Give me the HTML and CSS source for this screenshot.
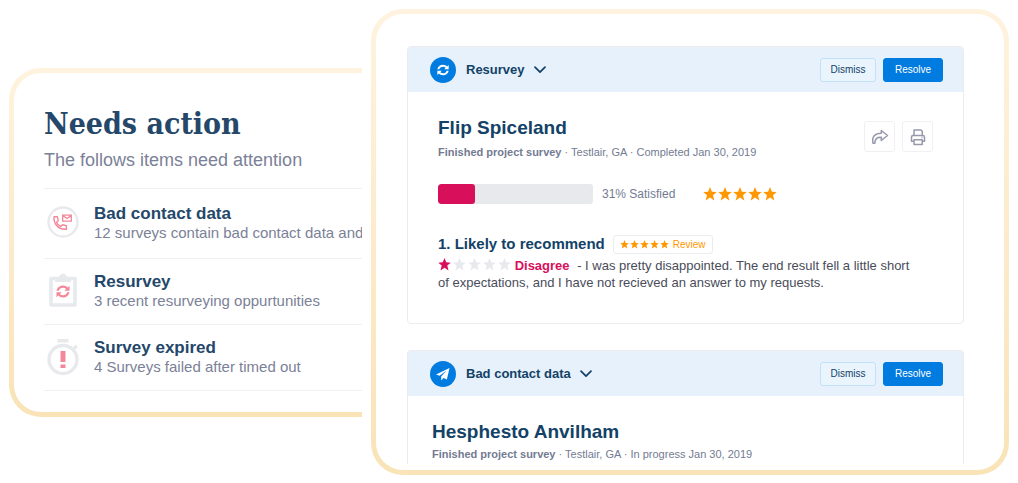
FILE: index.html
```html
<!DOCTYPE html>
<html lang="en">
<head>
    <meta charset="UTF-8">
    <meta name="viewport" content="width=device-width, initial-scale=1.0">
    <title>Needs action</title>
    <link rel="stylesheet" href="styles.css">
</head>
<body>
    <svg class="sprite" aria-hidden="true">
        <symbol id="star" viewBox="0 0 14 14">
            <path d="M7 0l1.900 4.700 4.800.3-3.700 3.200 1.300 5.200L7 10.600l-4.300 2.800L4 8.200.3 5l4.800-.3z"/>
        </symbol>
        <symbol id="sync" viewBox="0 0 16 16">
            <path d="M1.500 7.200C2 4.200 4.700 1.900 8 1.900c1.900 0 3.600.8 4.700 2l1.800-1.700v5H9.400l1.700-1.700A4.300 4.300 0 0 0 8 4.200c-2 0-3.700 1.200-4.200 3z"/>
            <path d="M14.500 8.800c-.5 3-3.200 5.300-6.500 5.300-1.900 0-3.600-.8-4.700-2l-1.800 1.700v-5h5.100l-1.700 1.700A4.300 4.300 0 0 0 8 11.800c2 0 3.700-1.200 4.200-3z"/>
        </symbol>
        <symbol id="chevron" viewBox="0 0 12 8">
            <path d="M1 1.200l5 5 5-5" fill="none" stroke="currentColor" stroke-width="1.700" stroke-linecap="round" stroke-linejoin="round"/>
        </symbol>
    </svg>

    <main class="page">
        <section class="panel summary">
            <h1>Needs action</h1>
            <p class="intro">The follows items need attention</p>
            <ul class="items">
                <li>
                    <svg class="item-icon" viewBox="0 0 32 38" aria-hidden="true">
                        <circle cx="16" cy="18" r="14.500" fill="none" stroke="#e8e9ed" stroke-width="2.400"/>
                        <path d="M7 12.800h3.400l.9 4-1.800 1.400c.8 2.200 2.200 3.600 4.400 4.400l1.500-1.800 4 .9v3.500C12 26 6.500 20.500 7 12.800z" fill="none" stroke="#f4889a" stroke-width="1.400" stroke-linejoin="round"/>
                        <path d="M15.700 11.200h8.600v6h-8.600zM15.900 11.600l4.100 2.900 4.100-2.900" fill="none" stroke="#f4889a" stroke-width="1.300"/>
                    </svg>
                    <div>
                        <h2>Bad contact data</h2>
                        <p>12 surveys contain bad contact data and</p>
                    </div>
                </li>
                <li>
                    <svg class="item-icon" viewBox="0 0 32 38" aria-hidden="true">
                        <path d="M4 6.500h24v26.500H4z" fill="none" stroke="#e8e9ed" stroke-width="3.600" stroke-linejoin="round"/>
                        <path d="M8 10V5h4c.7-2 2-3.200 4-3.200S19.300 3 20 5h4v5z" fill="#e8e9ed"/>
                        <svg x="8" y="11" width="16" height="17" fill="#f4889a"><use href="#sync"/></svg>
                    </svg>
                    <div>
                        <h2>Resurvey</h2>
                        <p>3 recent resurveying oppurtunities</p>
                    </div>
                </li>
                <li>
                    <svg class="item-icon" viewBox="0 0 32 38" aria-hidden="true">
                        <path d="M10.500 1h11v3.600h-11zM25.500 9.500l3-3 2.500 2.500-3 3z" fill="#e8e9ed"/>
                        <circle cx="16" cy="21.500" r="14" fill="none" stroke="#e8e9ed" stroke-width="3.400"/>
                        <path d="M13.500 13h5v11h-5zM13.500 26.500h5V30h-5z" fill="#f4889a"/>
                    </svg>
                    <div>
                        <h2>Survey expired</h2>
                        <p>4 Surveys failed after timed out</p>
                    </div>
                </li>
            </ul>
        </section>

        <section class="panel surveys">
            <article class="card">
                <header class="card-header">
                    <span class="badge">
                        <svg width="14" height="14" aria-hidden="true"><use href="#sync"/></svg>
                    </span>
                    <label class="type">
                        <select aria-label="Survey type">
                            <option selected>Resurvey</option>
                            <option>Bad contact data</option>
                        </select>
                        <svg width="12" height="8" aria-hidden="true"><use href="#chevron"/></svg>
                    </label>
                    <button type="button" class="dismiss">Dismiss</button>
                    <button type="button" class="resolve">Resolve</button>
                </header>
                <div class="card-body">
                    <div class="person">
                        <div>
                            <h2>Flip Spiceland</h2>
                            <p class="meta"><b>Finished project survey</b> · Testlair, GA · Completed Jan 30, 2019</p>
                        </div>
                        <div class="tools">
                            <button type="button" aria-label="Share">
                                <svg width="18" height="18" viewBox="0 0 18 18" aria-hidden="true"><path d="M2 15.200C.6 8.600 4 5.300 10.300 5.300V2.500L16.500 7.500l-6.200 5V9.200C6.300 9 4 10.500 3.800 15.200z"/></svg>
                            </button>
                            <button type="button" aria-label="Print">
                                <svg width="18" height="18" viewBox="0 0 18 18" aria-hidden="true"><path d="M5 7.500V2h7l1.300 1.300v4.200M5 13.300H2.500V9.200c0-1 .6-1.700 1.600-1.700h9.800c1 0 1.600.7 1.600 1.700v4.100H13M5 11.700h8.200v4.700H5zM12.500 9.600h1"/></svg>
                            </button>
                        </div>
                    </div>
                    <div class="score">
                        <div class="bar" role="img" aria-label="31% satisfied"><span style="width: 24%"></span></div>
                        <span class="percent">31% Satisfied</span>
                        <span class="stars large">
                            <svg><use href="#star"/></svg><svg><use href="#star"/></svg><svg><use href="#star"/></svg><svg><use href="#star"/></svg><svg><use href="#star"/></svg>
                        </span>
                    </div>
                    <div class="question">
                        <h3>1. Likely to recommend</h3>
                        <span class="review">
                            <span class="stars small">
                                <svg><use href="#star"/></svg><svg><use href="#star"/></svg><svg><use href="#star"/></svg><svg><use href="#star"/></svg><svg><use href="#star"/></svg>
                            </span>
                            Review
                        </span>
                    </div>
                    <p class="answer">
                        <span class="stars rating">
                            <svg class="on"><use href="#star"/></svg><svg><use href="#star"/></svg><svg><use href="#star"/></svg><svg><use href="#star"/></svg><svg><use href="#star"/></svg>
                        </span>
                        <b>Disagree</b> - I was pretty disappointed. The end result fell a little short of expectations, and I have not recieved an answer to my requests.
                    </p>
                </div>
            </article>

            <article class="card cut">
                <header class="card-header">
                    <span class="badge">
                        <svg width="16" height="16" viewBox="0 0 16 16" aria-hidden="true"><path d="M14.500 2L1 8.400l3.600 1.400 7-5.200L6.200 10.600v4l2.200-2.600 3.500 1.600z"/></svg>
                    </span>
                    <label class="type">
                        <select aria-label="Survey type">
                            <option>Resurvey</option>
                            <option selected>Bad contact data</option>
                        </select>
                        <svg width="12" height="8" aria-hidden="true"><use href="#chevron"/></svg>
                    </label>
                    <button type="button" class="dismiss">Dismiss</button>
                    <button type="button" class="resolve">Resolve</button>
                </header>
                <div class="card-body">
                    <h2>Hesphesto Anvilham</h2>
                    <p class="meta"><b>Finished project survey</b> · Testlair, GA · In progress Jan 30, 2019</p>
                </div>
            </article>
        </section>
    </main>
</body>
</html>
```
FILE: styles.css
```css
* {
    box-sizing: border-box;
}

body {
    margin: 0;
    background: #fff;
    color: #134267;
    font-family: "Liberation Sans", Arial, sans-serif;
}

h1, h2, h3, p, ul {
    margin: 0;
    padding: 0;
}

button, select {
    font-family: inherit;
    cursor: pointer;
}

.sprite {
    display: none;
}

.page {
    display: grid;
    grid-template-columns: minmax(0, 353fr) minmax(0, 638fr);
    gap: 9px;
    align-items: center;
    padding: 9px;
}

.panel {
    border: 5px solid transparent;
    border-radius: 32px;
    background: linear-gradient(#fff, #fff) padding-box, linear-gradient(#fff3df, #f9e3b7) border-box;
}

/* needs action list */
.summary {
    border-right: 0;
    border-radius: 32px 0 0 32px;
    padding: 31px 0 21px 30px;
    overflow: hidden;
    white-space: nowrap;
}

.summary h1 {
    font-family: "DejaVu Serif Condensed", "DejaVu Serif", serif;
    font-size: 30px;
    line-height: 40px;
    color: #24476a;
}

.intro {
    margin-bottom: 12px;
    font-size: 18px;
    line-height: 32px;
    color: #7b8197;
}

.items {
    list-style: none;
    border-top: 1px solid #f0f0f3;
}

.items li {
    display: flex;
    align-items: center;
    gap: 15px;
    height: 66px;
    padding-left: 3px;
    border-bottom: 1px solid #f0f0f3;
}

.items li:first-child {
    height: 70px;
}

.item-icon {
    flex: none;
    width: 32px;
    height: 38px;
}

.items h2 {
    font-size: 17px;
    line-height: 19px;
    color: #24476a;
}

.items p {
    font-size: 15px;
    line-height: 19px;
    color: #7b8197;
}

/* survey cards */
.surveys {
    padding: 32px 40px 6px 31px;
}

.card {
    border: 1px solid #ececef;
    border-radius: 4px;
    margin-bottom: 26px;
}

.card.cut {
    margin-bottom: 0;
    border-bottom: 0;
    border-radius: 4px 4px 0 0;
}

.card-header {
    display: flex;
    align-items: center;
    height: 45px;
    padding: 0 20px 0 22px;
    border-radius: 3px 3px 0 0;
    background: #e6f1fb;
}

.badge {
    display: flex;
    align-items: center;
    justify-content: center;
    width: 26px;
    height: 26px;
    border-radius: 50%;
    background: #007ce0;
    fill: #fff;
}

.type {
    display: flex;
    align-items: center;
    gap: 9px;
    margin: 0 auto 0 10px;
}

.type select {
    field-sizing: content;
    appearance: none;
    padding: 0;
    border: 0;
    background: none;
    color: #134267;
    font-size: 13px;
    font-weight: bold;
}

.card-header button {
    height: 24px;
    border: 1px solid #c3e1fa;
    border-radius: 3px;
    background: #e9f4fd;
    color: #134267;
    font-size: 10px;
}

.card-header .dismiss {
    width: 56px;
    margin-right: 7px;
}

.card-header .resolve {
    width: 60px;
    border-color: #007ce0;
    background: #007ce0;
    color: #fff;
}

.card-body {
    padding: 24px 30px 32px;
}

.cut .card-body {
    padding: 24px 24px 0;
}

.card-body h2 {
    font-size: 19px;
    line-height: 24px;
}

.meta {
    font-size: 11px;
    line-height: 20px;
    color: #737b92;
}

.person {
    display: flex;
    justify-content: space-between;
    align-items: flex-start;
}

.person .meta {
    margin-top: 2px;
}

.tools {
    display: flex;
    gap: 7px;
    margin-top: 5px;
}

.tools button {
    display: flex;
    align-items: center;
    justify-content: center;
    width: 31px;
    height: 31px;
    padding: 0;
    border: 1px solid #f0f0f2;
    border-radius: 3px;
    background: #fff;
}

.tools svg {
    fill: none;
    stroke: #9699ab;
    stroke-width: 1.5;
    stroke-linejoin: round;
}

.score {
    display: flex;
    align-items: center;
    margin: 22px 0 30px;
}

.bar {
    width: 155px;
    height: 20px;
    border-radius: 3px;
    background: #e8e9ed;
    overflow: hidden;
}

.bar span {
    display: block;
    height: 100%;
    border-radius: 3px;
    background: #d80f5b;
}

.percent {
    margin: 0 28px 0 9px;
    font-size: 12px;
    color: #737b92;
}

.stars {
    display: inline-flex;
    gap: 1px;
    fill: #ff9800;
}

.stars svg {
    width: 14px;
    height: 14px;
}

.stars.small svg {
    width: 9px;
    height: 9px;
}

.stars.rating {
    gap: 2px;
    vertical-align: -1px;
    fill: #e8e9ed;
}

.stars.rating svg {
    width: 13px;
    height: 13px;
}

.stars.rating .on {
    fill: #d80f5b;
}

.question {
    display: flex;
    align-items: center;
    gap: 8px;
    margin-bottom: 3px;
}

.question h3 {
    font-size: 15px;
    line-height: 20px;
}

.review {
    display: flex;
    align-items: center;
    gap: 4px;
    height: 19px;
    padding: 0 6px;
    border: 1px solid #ececef;
    border-radius: 3px;
    font-size: 10px;
    color: #ff9800;
}

.answer {
    max-width: 484px;
    font-size: 13px;
    line-height: 17px;
    color: #494c5a;
}

.answer b {
    margin-right: 4px;
    color: #d80f5b;
}
```
